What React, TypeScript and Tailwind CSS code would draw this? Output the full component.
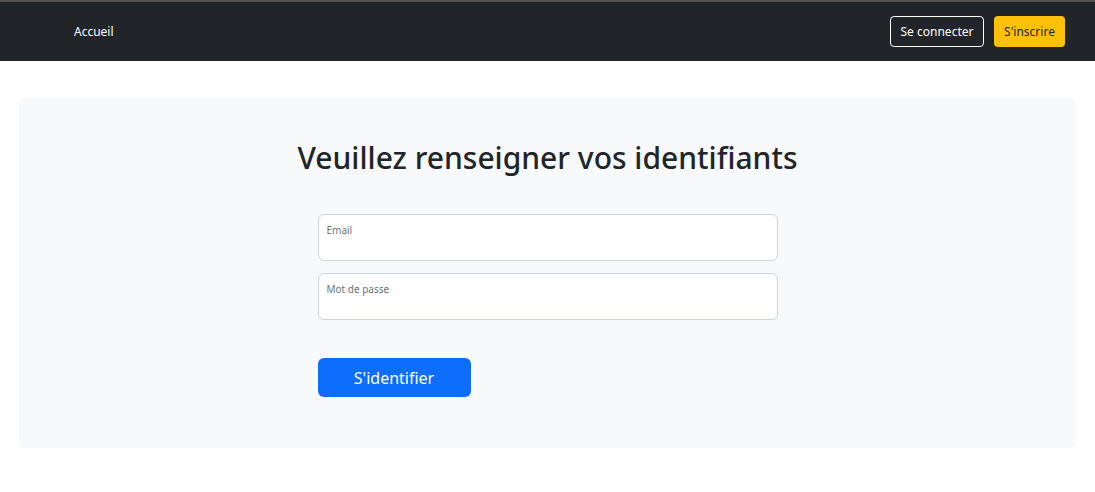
import React from "react";

const font = { fontFamily: '"Noto Sans", "Open Sans", sans-serif' };

const Navbar: React.FC = () => {
	return (
		<nav className="border-t-2 border-[#505050] bg-[#212529] h-[61px] flex items-center justify-between pl-[74px] pr-[30px]">
			<a className="text-white text-[12px]">Accueil</a>
			<div className="flex items-center gap-[10px]">
				<button className="h-[31px] w-[94px] border border-white rounded-[4px] text-white text-[12px]">
					Se connecter
				</button>
				<button className="h-[31px] w-[71px] bg-[#ffc107] rounded-[4px] text-[#212529] text-[12px]">
					S'inscrire
				</button>
			</div>
		</nav>
	);
};

const Field: React.FC<{ label: string; type: string }> = ({ label, type }) => {
	return (
		<div className="relative w-full h-[47px] bg-white border border-[#ced4da] rounded-[6px]">
			<label className="absolute left-[8px] top-[8px] text-[10px] text-[#6c757d]">
				{label}
			</label>
			<input
				type={type}
				className="w-full h-full bg-transparent outline-none px-[9px] pt-[18px]"
			/>
		</div>
	);
};

export default function App() {
	return (
		<div className="min-h-screen bg-white" style={font}>
			<Navbar />
			<div className="px-[19px] pt-[37px]">
				<div className="bg-[#f8f9fa] rounded-[6px] flex flex-col items-center pt-[42px] pb-[51px]">
					<h2 className="text-[30px] font-medium text-[#212529] leading-[1.2]">
						Veuillez renseigner vos identifiants
					</h2>
					<form className="w-[460px] mt-[38px] flex flex-col">
						<Field label="Email" type="email" />
						<div className="mt-[12px]">
							<Field label="Mot de passe" type="password" />
						</div>
						<button
							type="button"
							className="mt-[38px] w-[153px] h-[39px] bg-[#0d6efd] rounded-[6px] text-white text-[16px]">
							S'identifier
						</button>
					</form>
				</div>
			</div>
		</div>
	);
}
